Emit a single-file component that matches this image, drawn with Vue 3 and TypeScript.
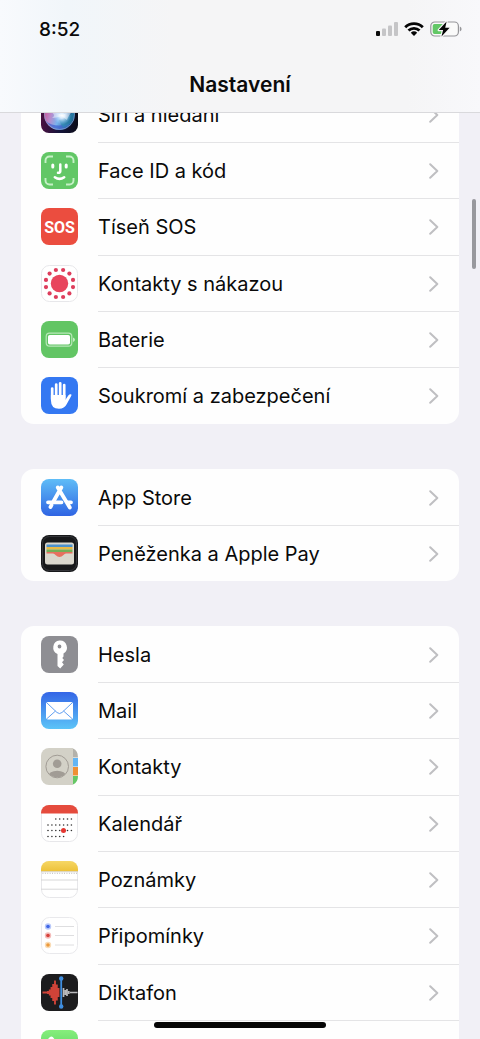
<script setup lang="ts">
interface Row {
  id: string
  label: string
  title?: string
}

const groups: Row[][] = [
  [
    { id: 'siri', label: 'Siri a hledání' },
    { id: 'faceid', label: 'Face ID a kód' },
    { id: 'sos', label: 'Tíseň SOS' },
    { id: 'exposure', label: 'Kontakty s nákazou' },
    { id: 'battery', label: 'Baterie' },
    { id: 'privacy', label: 'Soukromí a zabezpečení' },
  ],
  [
    { id: 'appstore', label: 'App Store' },
    { id: 'wallet', label: 'Peněženka a Apple Pay' },
  ],
  [
    { id: 'passwords', label: 'Hesla' },
    { id: 'mail', label: 'Mail' },
    { id: 'contacts', label: 'Kontakty' },
    { id: 'calendar', label: 'Kalendář' },
    { id: 'notes', label: 'Poznámky' },
    { id: 'reminders', label: 'Připomínky' },
    { id: 'voice', label: 'Diktafon' },
    { id: 'phone', label: '', title: 'Telefon' },
  ],
]

// Twelve dots on a circle round the centre of the exposure icon
const ring = Array.from({ length: 12 }, (_, i) => {
  const angle = ((i * 30 + 15) * Math.PI) / 180
  return { x: 18.5 + 14 * Math.cos(angle), y: 18.5 + 14 * Math.sin(angle) }
})

// Day dots of the calendar icon: first and last column of each week
const weeks = [
  { y: 14, from: 2, to: 6 },
  { y: 20, from: 0, to: 6 },
  { y: 25.5, from: 0, to: 6 },
  { y: 31.5, from: 0, to: 4 },
]
const days = weeks.flatMap((w) =>
  Array.from({ length: w.to - w.from + 1 }, (_, i) => ({ x: 7 + (w.from + i) * 3.9, y: w.y })),
)

const reminderDots = [
  { y: 9.5, color: '#3f66e6', halo: '#b9c9fa' },
  { y: 18.5, color: '#d6423c', halo: '#f4bcba' },
  { y: 28, color: '#ec9a3c', halo: '#fadcb6' },
]
</script>

<template>
  <div class="screen">
    <header class="bar">
      <div class="status">
        <time class="clock">8:52</time>
        <div class="indicators">
          <svg class="signal" viewBox="0 0 22 14" aria-hidden="true">
            <rect x="0" y="9" width="4" height="5" rx="1" fill="#0b0b0b" />
            <rect x="6" y="6.5" width="4" height="7.5" rx="1" fill="#c5c5c7" />
            <rect x="12" y="3.5" width="4" height="10.5" rx="1" fill="#c5c5c7" />
            <rect x="18" y="0" width="4" height="14" rx="1" fill="#c5c5c7" />
          </svg>
          <svg class="wifi" viewBox="0 0 20 14" aria-hidden="true">
            <g fill="none" stroke="#050505" stroke-width="2.8">
              <path d="M1.2 5.2A12.4 12.4 0 0 1 18.8 5.2" />
              <path d="M4.5 8.6A7.8 7.8 0 0 1 15.5 8.6" />
            </g>
            <path d="M6.8 10.8A4.7 4.7 0 0 1 13.2 10.8L10 14Z" fill="#050505" />
          </svg>
          <svg class="power" viewBox="0 0 32 16" aria-hidden="true">
            <rect x="0.8" y="1" width="27.6" height="14" rx="4" fill="#fafafa" stroke="#96969a" stroke-width="1.2" />
            <path d="M4.5 3H14V13H4.5A1.8 1.8 0 0 1 2.7 11.2V4.8A1.8 1.8 0 0 1 4.5 3Z" fill="#62c766" />
            <path d="M29.8 5.5Q31.6 6.4 31.6 8T29.8 10.5Z" fill="#96969a" />
            <path d="M16.6 0.6L8.8 9.1H13.1L11.5 15.4L19.6 6.7H15.2Z" fill="#050505" stroke="#f6f6f6" stroke-width="2.4" stroke-linejoin="round" paint-order="stroke" />
          </svg>
        </div>
      </div>
      <h1 class="title">Nastavení</h1>
    </header>

    <main class="content">
      <ul v-for="(group, g) in groups" :key="g" class="card">
        <li v-for="row in group" :key="row.id" class="item">
          <a class="row" :href="'#' + row.id" :aria-label="row.title">
            <svg class="icon" :class="row.id" viewBox="0 0 37 37" aria-hidden="true">
              <template v-if="row.id === 'siri'">
                <defs>
                  <linearGradient id="siri-bg" x1="0" x2="1">
                    <stop offset="0" stop-color="#4a1040" />
                    <stop offset="0.5" stop-color="#14143a" />
                    <stop offset="1" stop-color="#0c0c18" />
                  </linearGradient>
                  <linearGradient id="siri-orb" x1="0" x2="1" y2="0.3">
                    <stop offset="0" stop-color="#d43d7d" />
                    <stop offset="0.35" stop-color="#b98bcc" />
                    <stop offset="0.6" stop-color="#78b4ee" />
                    <stop offset="1" stop-color="#1b4f80" />
                  </linearGradient>
                  <radialGradient id="siri-glow">
                    <stop offset="0" stop-color="#fff" />
                    <stop offset="0.3" stop-color="#e6f3ff" stop-opacity="0.9" />
                    <stop offset="1" stop-color="#9ecbff" stop-opacity="0" />
                  </radialGradient>
                </defs>
                <rect width="37" height="37" rx="8" fill="url(#siri-bg)" />
                <circle cx="18.5" cy="18.5" r="15.5" fill="url(#siri-orb)" />
                <path d="M4.500 25Q15 33 30 27Q25 34 17 33.800Q9 32 4.500 25Z" fill="#3f5fd0" opacity="0.7" />
                <path d="M18 24Q28 22 33.500 14Q34 28 22 32Z" fill="#2c8fb0" opacity="0.6" />
                <circle cx="18.500" cy="18.500" r="15" fill="none" stroke="#86a0cf" stroke-opacity="0.7" />
                <circle cx="21" cy="19.500" r="9" fill="url(#siri-glow)" />
                <path d="M8 14Q16 16 21 19.500Q27 15 33 13Q27 20 26 24Q22 21 21 20Q15 22 11 22Q16 19 8 14Z" fill="#fff" opacity="0.45" />
              </template>

              <template v-else-if="row.id === 'faceid'">
                <rect width="37" height="37" rx="8" fill="#62c766" />
                <path d="M4.500 11V8.500A4 4 0 0 1 8.500 4.500H12M25 4.500H28.500A4 4 0 0 1 32.500 8.500V11M32.500 26V28.500A4 4 0 0 1 28.500 32.500H25M12 32.500H8.500A4 4 0 0 1 4.500 28.500V26" fill="none" stroke="#c5f0c6" stroke-width="1.9" />
                <g fill="none" stroke="#fff" stroke-linecap="round">
                  <path d="M11.800 13V15M25.200 13V15" stroke-width="3" />
                  <path d="M19.300 12.500V19.200Q19.300 21 17 20.800" stroke-width="2.500" />
                  <path d="M13.800 25.200Q18.500 28.600 23.200 25.200" stroke-width="2.500" />
                </g>
              </template>

              <template v-else-if="row.id === 'sos'">
                <rect width="37" height="37" rx="8" fill="#eb4d3f" />
                <text x="18.500" y="24.500" class="sos-text" text-anchor="middle">SOS</text>
              </template>

              <template v-else-if="row.id === 'exposure'">
                <rect x="0.500" y="0.500" width="36" height="36" rx="8" fill="#fff" stroke="#e7e7ea" />
                <circle cx="18.500" cy="18.500" r="8.700" fill="#e8455d" />
                <circle v-for="(dot, d) in ring" :key="d" :cx="dot.x" :cy="dot.y" r="2.100" fill="#de3d5c" />
              </template>

              <template v-else-if="row.id === 'battery'">
                <rect width="37" height="37" rx="8" fill="#62c564" />
                <rect x="5.200" y="12.200" width="25.600" height="13" rx="3.400" fill="none" stroke="#b9e8b9" stroke-width="1.200" />
                <rect x="7" y="14" width="22" height="9.500" rx="1.800" fill="#fff" />
                <path d="M32 16.500Q34 17.200 34 18.700T32 21Z" fill="#c5ecc5" />
              </template>

              <template v-else-if="row.id === 'privacy'">
                <rect width="37" height="37" rx="8" fill="#3478f2" />
                <g fill="none" stroke="#fff" stroke-width="2.700" stroke-linecap="round">
                  <path d="M11.200 11.500V22M15.200 7.500V20M19.200 6.300V20M23.200 8V21" />
                </g>
                <path d="M9.900 18H24.500V22.800L27.300 18.500Q28.400 17 30 17.300Q30.800 17.600 30.300 18.700L25.800 27Q23.500 31.800 18 31.800Q9.900 31.800 9.900 23Z" fill="#fff" />
              </template>

              <template v-else-if="row.id === 'appstore'">
                <defs>
                  <linearGradient id="store-bg" x2="0" y2="1">
                    <stop offset="0" stop-color="#5fbdf7" />
                    <stop offset="1" stop-color="#2f64e3" />
                  </linearGradient>
                </defs>
                <rect width="37" height="37" rx="8" fill="url(#store-bg)" />
                <g fill="none" stroke="#fff" stroke-width="3.800" stroke-linecap="round">
                  <path d="M20.300 8.500L12.700 22M16.800 8.500L28.800 28.500M10.500 26.200L9.500 28" />
                  <path d="M7 23.300H20.500M26.500 23.300H30" />
                </g>
              </template>

              <template v-else-if="row.id === 'wallet'">
                <rect width="37" height="37" rx="8" fill="#17181a" />
                <rect x="1.500" y="1.500" width="34" height="34" rx="7" fill="none" stroke="#35363a" />
                <rect x="4" y="7.500" width="29" height="22" rx="2.500" fill="#dad7cd" />
                <path d="M5.500 9.500H31.500V12H5.500Z" fill="#4b91cc" />
                <path d="M5.500 12H31.500V14.500H5.500Z" fill="#e9b944" />
                <path d="M5.500 14.500H31.500V17H5.500Z" fill="#74ae57" />
                <path d="M5.500 17H31.500V18.500H25Q23.500 18.500 22.500 20Q18.500 24 14.500 20Q13.500 18.500 12 18.500H5.500Z" fill="#e6705f" />
              </template>

              <template v-else-if="row.id === 'passwords'">
                <rect width="37" height="37" rx="8" fill="#8e8e93" />
                <path fill-rule="evenodd" d="M18.500 4.500A7 7 0 0 1 22.500 17.500V20.500L21.300 22L23 24L21 26.200L22.800 28.500L19.200 32.600L16.500 30V17.900A7 7 0 0 1 18.500 4.500ZM18.500 8.600A1.900 1.900 0 1 0 18.500 12.400A1.900 1.900 0 1 0 18.500 8.600Z" fill="#fff" />
              </template>

              <template v-else-if="row.id === 'mail'">
                <defs>
                  <linearGradient id="mail-bg" x2="0" y2="1">
                    <stop offset="0" stop-color="#3465e6" />
                    <stop offset="1" stop-color="#5cc4f8" />
                  </linearGradient>
                </defs>
                <rect width="37" height="37" rx="8" fill="url(#mail-bg)" />
                <rect x="5" y="10" width="27" height="17.500" rx="1.800" fill="#fff" />
                <path d="M5.500 10.500L16 20.500Q18.500 22.600 21 20.500L31.500 10.500M5.500 27L14.500 19M31.500 27L22.500 19" fill="none" stroke="#4f94ee" stroke-width="0.900" />
              </template>

              <template v-else-if="row.id === 'contacts'">
                <path d="M8 0H32V37H8A8 8 0 0 1 0 29V8A8 8 0 0 1 8 0Z" fill="#d3d1c7" />
                <path d="M32 0.600Q37 2.500 37 9.500H32Z" fill="#b3b1aa" />
                <path d="M32 10H37V18.500H32Z" fill="#63b5f4" />
                <path d="M32 19H37V27.500H32Z" fill="#ef8f34" />
                <path d="M32 28H37Q37 34.500 32 36.500Z" fill="#65c765" />
                <clipPath id="contact-clip"><circle cx="16.200" cy="18.500" r="10.800" /></clipPath>
                <g fill="#a19c95">
                  <circle cx="16.200" cy="15.800" r="4.300" />
                  <ellipse cx="16.200" cy="28" rx="9" ry="5.300" clip-path="url(#contact-clip)" />
                </g>
                <circle cx="16.200" cy="18.500" r="11.300" fill="none" stroke="#a19c95" stroke-width="1" />
              </template>

              <template v-else-if="row.id === 'calendar'">
                <rect x="0.500" y="0.500" width="36" height="36" rx="8" fill="#fff" stroke="#e7e7ea" />
                <path d="M0 8.500V8A8 8 0 0 1 8 0H29A8 8 0 0 1 37 8V8.500Z" fill="#e54b3d" />
                <circle v-for="(day, d) in days" :key="d" :cx="day.x" :cy="day.y" r="0.800" fill="#333" />
                <circle cx="22.500" cy="25.500" r="2.500" fill="#e43630" />
              </template>

              <template v-else-if="row.id === 'notes'">
                <defs>
                  <linearGradient id="notes-top" x2="0" y2="1">
                    <stop offset="0" stop-color="#f6d765" />
                    <stop offset="1" stop-color="#edc138" />
                  </linearGradient>
                </defs>
                <rect x="0.500" y="0.500" width="36" height="36" rx="8" fill="#fff" stroke="#e7e7ea" />
                <path d="M0 10.500V8A8 8 0 0 1 8 0H29A8 8 0 0 1 37 8V10.500Z" fill="url(#notes-top)" />
                <path d="M0 10.800H37M0 19H37M0 28.200H37" stroke="#d2d2d4" stroke-width="0.900" />
                <path d="M1.500 12.300H36" stroke="#aaa" stroke-width="0.900" stroke-dasharray="0.900 1.500" />
              </template>

              <template v-else-if="row.id === 'reminders'">
                <rect x="0.500" y="0.500" width="36" height="36" rx="8" fill="#fff" stroke="#e9e9ec" />
                <template v-for="dot in reminderDots" :key="dot.y">
                  <circle cx="7" :cy="dot.y" r="3.200" :fill="dot.halo" />
                  <circle cx="7" :cy="dot.y" r="1.800" :fill="dot.color" />
                  <path :d="`M14 ${dot.y}H33`" stroke="#dadadd" stroke-width="0.900" />
                </template>
              </template>

              <template v-else-if="row.id === 'voice'">
                <rect width="37" height="37" rx="8" fill="#1c1c1e" />
                <path d="M1.500 18.500H7M7 17V20M8.800 15.500V21.500M10.500 13V24M12.200 10V27M14 6.500V30.500M15.800 10.500V26.500M17.500 14V23" stroke="#cf4338" stroke-width="1.900" fill="none" />
                <path d="M22.500 14V23M24.300 16V21M26 15V22M27.800 17V20M29 18.500H36.500" stroke="#b9b9bc" stroke-width="1.700" fill="none" />
                <path d="M20.200 4.500V32.500" stroke="#3f8ee0" stroke-width="1.800" />
                <circle cx="20.200" cy="4.500" r="2.200" fill="#3f8ee0" />
                <circle cx="20.200" cy="32.500" r="2.200" fill="#3f8ee0" />
              </template>

              <template v-else>
                <defs>
                  <linearGradient id="phone-bg" x2="0" y2="1">
                    <stop offset="0" stop-color="#86ee7c" />
                    <stop offset="1" stop-color="#45c552" />
                  </linearGradient>
                </defs>
                <rect width="37" height="37" rx="8" fill="url(#phone-bg)" />
                <path d="M9.500 6.800Q11.500 6 13 8.500L15 11.500Q16 13.300 14 15Q12.800 16.300 14 18.200Q16 21.500 19 23.500Q20.800 24.500 22 23.200Q23.500 21.400 25.500 22.500L29 25Q31 26.500 29.500 28.500Q26 33 19 29Q11 24.500 7.500 17Q4.500 9.500 9.500 6.800Z" fill="#fff" />
              </template>
            </svg>
            <span class="cell">
              <span class="label">{{ row.label }}</span>
              <svg class="chevron" viewBox="0 0 10 16" aria-hidden="true">
                <path d="M1.200 1.200L8.300 8L1.200 14.800" />
              </svg>
            </span>
          </a>
        </li>
      </ul>
    </main>

    <div class="scroll-thumb"></div>
    <div class="home-indicator"></div>
  </div>
</template>

<style>
html,
body {
  background: #f1f0f6;
}
</style>

<style scoped>
.screen {
  position: relative;
  height: 100vh;
  overflow: hidden;
  background: #f1f0f6;
  color: #0a0a0a;
  font-family: Inter, 'Liberation Sans', sans-serif;
}

.bar {
  position: absolute;
  inset: 0 0 auto;
  z-index: 1;
  box-sizing: border-box;
  height: 113px;
  border-bottom: 1px solid #d9d9dc;
  background: linear-gradient(90deg, #f8fafd, #f1f6fa 14%, #f5f5f6 36%, #f5f5f6 85%, #f8f8fb);
}

.status {
  display: flex;
  align-items: center;
  justify-content: space-between;
  height: 32px;
  padding: 13px 18px 0 39px;
}

.clock {
  font-size: 19px;
  font-weight: 500;
}

.indicators {
  display: flex;
  align-items: center;
  gap: 6px;
}

.signal {
  width: 22px;
  height: 14px;
}

.wifi {
  width: 20px;
  height: 14px;
}

.power {
  width: 32px;
  height: 16px;
}

.title {
  margin: 27px 0 0;
  font-size: 21px;
  font-weight: 600;
  line-height: 26px;
  text-align: center;
}

.content {
  display: flex;
  flex-direction: column;
  gap: 45px;
  padding: 86px 21px 0;
}

.card {
  flex: none;
  margin: 0;
  padding: 0;
  overflow: hidden;
  border-radius: 13px;
  background: #fefefe;
  list-style: none;
}

.row {
  display: flex;
  align-items: center;
  gap: 20px;
  height: 56px;
  padding-left: 20px;
  color: inherit;
  text-decoration: none;
}

.item:nth-child(3n) .row {
  height: 57px;
}

.icon {
  flex: none;
  width: 37px;
  height: 37px;
}

.cell {
  display: flex;
  flex: 1;
  align-items: center;
  justify-content: space-between;
  align-self: stretch;
  padding-right: 20px;
  border-top: 1px solid #e4e4e6;
}

.item:first-child .cell {
  border-top-color: transparent;
}

.label {
  font-size: 20px;
  line-height: 26px;
}

.chevron {
  width: 10px;
  height: 16px;
  fill: none;
  stroke: #bfbfc2;
  stroke-width: 2;
  stroke-linecap: round;
  stroke-linejoin: round;
}

.sos-text {
  fill: #fff;
  font-family: Roboto, 'Liberation Sans', sans-serif;
  font-size: 16px;
  font-weight: 700;
}

.scroll-thumb {
  position: absolute;
  top: 199px;
  right: 4px;
  width: 4px;
  height: 70px;
  border-radius: 2px;
  background: #98989d;
}

.home-indicator {
  position: absolute;
  bottom: 11px;
  left: 50%;
  width: 172px;
  height: 6px;
  border-radius: 3px;
  background: #050505;
  transform: translateX(-50%);
}
</style>
